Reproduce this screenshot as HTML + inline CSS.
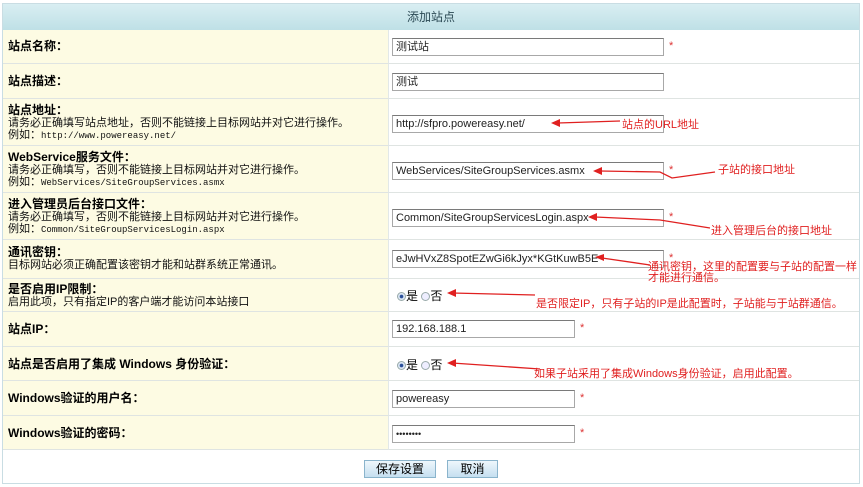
<!DOCTYPE html>
<html><head><meta charset="utf-8"><style>
*{margin:0;padding:0;box-sizing:border-box}
body{width:863px;height:487px;background:#fff;font-family:"Liberation Sans","Noto Sans CJK SC","WenQuanYi Zen Hei",sans-serif;font-size:12px;color:#000;position:relative;overflow:hidden}
.a{position:absolute}
.frame{left:2px;top:3px;width:858px;height:481px;border:1px solid #c9dde3}
.hdr{left:3px;top:4px;width:856px;height:26px;background:linear-gradient(#d9eef2,#bfe0e6);text-align:center;line-height:26px;color:#2c4a55;font-size:12px}
.lab{left:3px;width:385px;background:#fdfbe3;border-bottom:1px solid #dfe4e2;padding-left:5px}
.val{left:388px;width:471px;border-bottom:1px solid #dfe4e2;border-left:1px solid #e2e8e8;background:#fff}
.b{font-weight:bold;font-size:12px}
.s{font-size:11px;line-height:12px;color:#111}
.m{font-family:"Liberation Mono",monospace;font-size:9px}
.in{position:absolute;left:392px;height:18px;border:1px solid #a8a8a8;border-top-color:#7a7a7a;background:#fff;font-size:11px;padding-left:3px;line-height:16px;color:#222;white-space:nowrap;overflow:hidden}
.st{position:absolute;color:#d33;font-size:11px}
.r{position:absolute;color:#e02020;font-size:11px;white-space:nowrap}
.rd{display:inline-block;width:9px;height:9px;border-radius:50%;border:1px solid #9aa;vertical-align:-1px;background:#eef}
.rd.on{background:radial-gradient(#2a4f9a 30%,#dde8f5 45%)}
.btn{position:absolute;top:460px;height:18px;border:1px solid #8ab4cc;background:linear-gradient(#eef7fc,#c5dff0);font-size:12px;text-align:center;line-height:16px}
</style></head><body>
<div class="a frame"></div>
<div class="a hdr">添加站点</div>

<div class="a lab" style="top:30px;height:34px;line-height:33px"><span class="b">站点名称：</span></div>
<div class="a val" style="top:30px;height:34px"></div>
<div class="a lab" style="top:64px;height:35px;line-height:34px"><span class="b">站点描述：</span></div>
<div class="a val" style="top:64px;height:35px"></div>
<div class="a lab" style="top:99px;height:47px;padding-top:5px"><div class="b" style="line-height:13px">站点地址：</div><div class="s">请务必正确填写站点地址，否则不能链接上目标网站并对它进行操作。</div><div class="s">例如：<span class="m">http://www.powereasy.net/</span></div></div>
<div class="a val" style="top:99px;height:47px"></div>
<div class="a lab" style="top:146px;height:47px;padding-top:5px"><div class="b" style="line-height:13px">WebService服务文件：</div><div class="s">请务必正确填写，否则不能链接上目标网站并对它进行操作。</div><div class="s">例如：<span class="m">WebServices/SiteGroupServices.asmx</span></div></div>
<div class="a val" style="top:146px;height:47px"></div>
<div class="a lab" style="top:193px;height:47px;padding-top:5px"><div class="b" style="line-height:13px">进入管理员后台接口文件：</div><div class="s">请务必正确填写，否则不能链接上目标网站并对它进行操作。</div><div class="s">例如：<span class="m">Common/SiteGroupServicesLogin.aspx</span></div></div>
<div class="a val" style="top:193px;height:47px"></div>
<div class="a lab" style="top:240px;height:39px;padding-top:6px"><div class="b" style="line-height:13px">通讯密钥：</div><div class="s">目标网站必须正确配置该密钥才能和站群系统正常通讯。</div></div>
<div class="a val" style="top:240px;height:39px"></div>
<div class="a lab" style="top:279px;height:33px;padding-top:4px"><div class="b" style="line-height:13px">是否启用IP限制：</div><div class="s">启用此项，只有指定IP的客户端才能访问本站接口</div></div>
<div class="a val" style="top:279px;height:33px"></div>
<div class="a lab" style="top:312px;height:35px;line-height:34px"><span class="b">站点IP：</span></div>
<div class="a val" style="top:312px;height:35px"></div>
<div class="a lab" style="top:347px;height:34px;line-height:34px"><span class="b">站点是否启用了集成 Windows 身份验证：</span></div>
<div class="a val" style="top:347px;height:34px"></div>
<div class="a lab" style="top:381px;height:35px;line-height:35px"><span class="b">Windows验证的用户名：</span></div>
<div class="a val" style="top:381px;height:35px"></div>
<div class="a lab" style="top:416px;height:34px;line-height:34px"><span class="b">Windows验证的密码：</span></div>
<div class="a val" style="top:416px;height:34px"></div>

<div class="in" style="top:38px;width:272px">测试站</div><div class="st" style="left:669px;top:40px">*</div>
<div class="in" style="top:73px;width:272px">测试</div>
<div class="in" style="top:115px;width:272px">http://sfpro.powereasy.net/</div>
<div class="in" style="top:162px;width:272px">WebServices/SiteGroupServices.asmx</div><div class="st" style="left:669px;top:164px">*</div>
<div class="in" style="top:209px;width:272px">Common/SiteGroupServicesLogin.aspx</div><div class="st" style="left:669px;top:211px">*</div>
<div class="in" style="top:250px;width:272px">eJwHVxZ8SpotEZwGi6kJyx*KGtKuwB5E</div><div class="st" style="left:669px;top:252px">*</div>
<div class="a" style="left:397px;top:287px;font-size:12px"><span class="rd on"></span>是 <span class="rd"></span>否</div>
<div class="in" style="top:320px;width:183px">192.168.188.1</div><div class="st" style="left:580px;top:322px">*</div>
<div class="a" style="left:397px;top:356px;font-size:12px"><span class="rd on"></span>是 <span class="rd"></span>否</div>
<div class="in" style="top:390px;width:183px">powereasy</div><div class="st" style="left:580px;top:392px">*</div>
<div class="in" style="top:425px;width:183px;font-size:9px">••••••••</div><div class="st" style="left:580px;top:427px">*</div>

<svg class="a" style="left:0;top:0" width="863" height="487">
<g stroke="#e02020" stroke-width="1.3" fill="none">
<path d="M558 123 L620 121"/><path d="M600 171 L660 172 L672 178 L715 172"/>
<path d="M595 217 L660 220 L710 228"/><path d="M602 258 L650 265"/>
<path d="M452 293 L535 295"/><path d="M452 363 L540 369"/>
</g>
<g fill="#e02020">
<path d="M551 123 l9 -4 v8z"/><path d="M593 171 l9 -4 v8z"/><path d="M588 217 l9 -4 v8z"/>
<path d="M595 257 l9 -3 v7z"/><path d="M447 293 l9 -4 v8z"/><path d="M447 363 l9 -4 v8z"/>
</g>
</svg>
<div class="r" style="left:622px;top:116px">站点的URL地址</div>
<div class="r" style="left:718px;top:161px">子站的接口地址</div>
<div class="r" style="left:711px;top:222px">进入管理后台的接口地址</div>
<div class="r" style="left:648px;top:262px;line-height:11px">通讯密钥，这里的配置要与子站的配置一样<br>才能进行通信。</div>
<div class="r" style="left:536px;top:295px">是否限定IP，只有子站的IP是此配置时，子站能与于站群通信。</div>
<div class="r" style="left:534px;top:365px">如果子站采用了集成Windows身份验证，启用此配置。</div>

<div class="btn" style="left:364px;width:72px">保存设置</div>
<div class="btn" style="left:447px;width:51px">取消</div>
</body></html>
